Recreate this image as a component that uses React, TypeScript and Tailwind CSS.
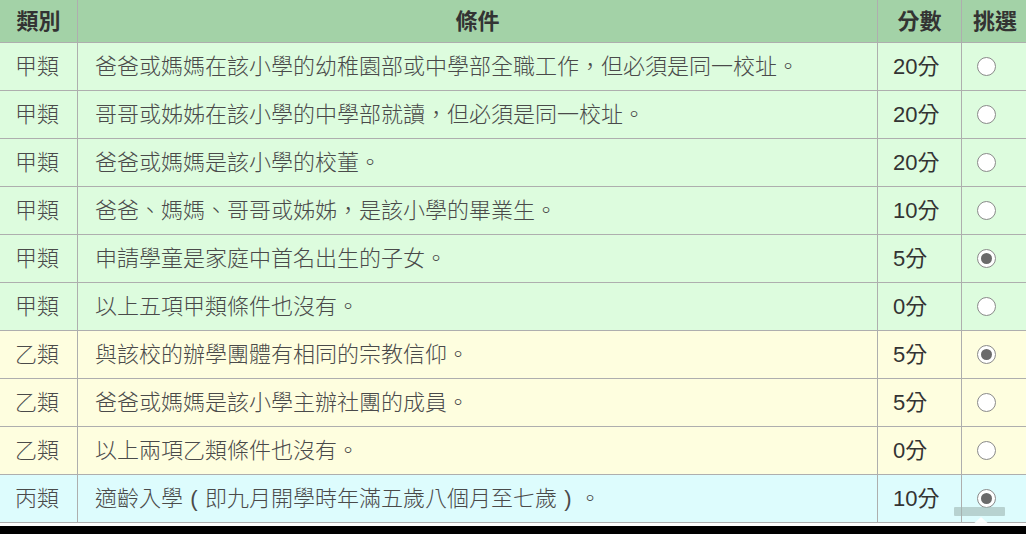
import React from "react";

type Row = { cat: string; text: React.ReactNode; score: string; checked: boolean; bg: string };

const G = "bg-[#ddfcde]";
const Y = "bg-[#fefedf]";
const C = "bg-[#ddfcfd]";

const P = ({ c }: { c: string }) => <span className="inline-block w-[22px] text-center">{c}</span>;

const rows: Row[] = [
  { cat: "甲類", text: "爸爸或媽媽在該小學的幼稚園部或中學部全職工作，但必須是同一校址。", score: "20分", checked: false, bg: G },
  { cat: "甲類", text: "哥哥或姊姊在該小學的中學部就讀，但必須是同一校址。", score: "20分", checked: false, bg: G },
  { cat: "甲類", text: "爸爸或媽媽是該小學的校董。", score: "20分", checked: false, bg: G },
  { cat: "甲類", text: "爸爸、媽媽、哥哥或姊姊，是該小學的畢業生。", score: "10分", checked: false, bg: G },
  { cat: "甲類", text: "申請學童是家庭中首名出生的子女。", score: "5分", checked: true, bg: G },
  { cat: "甲類", text: "以上五項甲類條件也沒有。", score: "0分", checked: false, bg: G },
  { cat: "乙類", text: "與該校的辦學團體有相同的宗教信仰。", score: "5分", checked: true, bg: Y },
  { cat: "乙類", text: "爸爸或媽媽是該小學主辦社團的成員。", score: "5分", checked: false, bg: Y },
  { cat: "乙類", text: "以上兩項乙類條件也沒有。", score: "0分", checked: false, bg: Y },
  {
    cat: "丙類",
    text: (
      <>
        適齡入學<P c="(" />即九月開學時年滿五歲八個月至七歲<P c=")" />。
      </>
    ),
    score: "10分",
    checked: true,
    bg: C,
  },
];

function Radio({ checked }: { checked: boolean }) {
  return (
    <div className="w-[19px] h-[19px] rounded-full border border-[#8a8a8a] bg-white flex items-center justify-center">
      {checked && <div className="w-[11px] h-[11px] rounded-full bg-[#6a6a6a]" />}
    </div>
  );
}

export default function App() {
  const font = { fontFamily: '"Liberation Sans", "Noto Sans CJK TC", sans-serif' };
  const cell = "border-r border-b border-[#aeaeae] flex items-center";
  return (
    <div className="w-[1026px] h-[534px] bg-white overflow-hidden relative" style={font}>
      <div className="w-[1040px] grid grid-cols-[78px_800px_84px_78px] text-[22px] text-[#4a4a4a] font-light">
        <div className={`${cell} h-[43px] bg-[#a3d2a7] justify-center font-bold text-[#333]`}>類別</div>
        <div className={`${cell} h-[43px] bg-[#a3d2a7] justify-center font-bold text-[#333]`}>條件</div>
        <div className={`${cell} h-[43px] bg-[#a3d2a7] justify-center font-bold text-[#333]`}>分數</div>
        <div className={`${cell} h-[43px] bg-[#a3d2a7] pl-[11px] font-bold text-[#333]`}>挑選</div>
        {rows.map((r, i) => (
          <React.Fragment key={i}>
            <div className={`${cell} h-[48px] ${r.bg} pl-[15px]`}>{r.cat}</div>
            <div className={`${cell} h-[48px] ${r.bg} pl-[17px]`}>{r.text}</div>
            <div className={`${cell} h-[48px] ${r.bg} pl-[15px] text-[#333] font-normal`}>{r.score}</div>
            <div className={`${cell} h-[48px] ${r.bg} pl-[15px]`}>
              <Radio checked={r.checked} />
            </div>
          </React.Fragment>
        ))}
      </div>
      <div className="absolute left-[954px] top-[507px] w-[51px] h-[9px] bg-[#9fb5b3]/60 rounded-[1px]" />
      <div className="absolute left-[970px] top-[517px] w-0 h-0 border-l-[11px] border-r-[11px] border-b-[10px] border-l-transparent border-r-transparent border-b-white/90" />
      <div className="absolute left-0 top-[526px] w-full h-[8px] bg-black" />
    </div>
  );
}
